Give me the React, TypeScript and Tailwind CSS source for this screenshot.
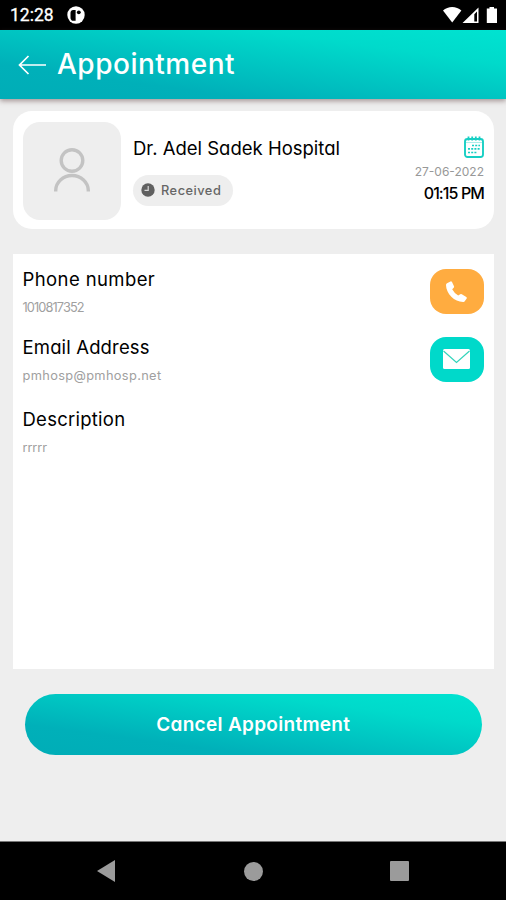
import type { ReactNode } from "react";

const teal = "bg-[linear-gradient(to_top_right,#00adb7_0%,#00b0b9_25%,#00dacb_75%,#00e3d1_100%)]";

function StatusBar() {
  return (
    <div className="flex h-[30px] shrink-0 items-center bg-black pl-[10px] pr-[8px] text-white">
      <span className="w-[44px] whitespace-nowrap font-['Roboto',sans-serif] text-[17.500px] leading-[33px] [-webkit-text-stroke:0.3px_white]">12:28</span>
      <svg className="ml-[13px]" width="18" height="18" viewBox="0 0 18 18">
        <circle cx="9" cy="9" r="8.7" fill="#fff" />
        <path d="M8.6 4H6.2C4.6 4 3.5 5.3 3.5 7v5c0 1.200.7 2.200 1.700 2.700H8.600Z" fill="#000" />
        <circle cx="11.800" cy="6.300" r="1.900" fill="#000" />
      </svg>
      <svg className="ml-auto" width="55" height="18" viewBox="0 0 55 18" fill="#fff">
        <path d="M0 4.500C2.500 2.200 5.800 1 9.200 1s6.600 1.200 9.200 3.500L9.200 16.500Z" />
        <path fillRule="evenodd" d="M35.500 1.500v15.500H19.500ZM31.300 8.200v7.300h2.700V5.500Z" />
        <path d="M46.500 1h4.500v1.500h3V17H43.800V2.500h2.700Z" />
      </svg>
    </div>
  );
}

function Header() {
  return (
    <header className={`${teal} z-10 flex h-[69px] shrink-0 items-center pl-[18px] text-white shadow-[0_2px_5px_rgba(90,60,60,0.5)]`}>
      <svg width="28" height="20" viewBox="0 0 28 20" fill="none" stroke="#fff" strokeWidth="1.700">
        <path d="M28 10H1.500M10.500 1 1.500 10l9 9" />
      </svg>
      <h1 className="ml-[11px] whitespace-nowrap text-[28px] font-medium leading-[67px] tracking-[0.5px]">Appointment</h1>
    </header>
  );
}

function SummaryCard() {
  return (
    <section className="flex h-[118px] shrink-0 rounded-[19px] bg-white pl-[10.500px] pr-[10px] pt-[10.500px]">
      <div className="flex h-[98px] w-[98px] items-center justify-center rounded-[17px] bg-[#eee]">
        <svg className="-mt-[2px]" width="38" height="46" viewBox="0 0 38 46" fill="none" stroke="#c3c3c3" strokeWidth="3.400">
          <circle cx="19" cy="13.500" r="10.800" />
          <path d="M2.700 44.500v-1a16.300 15 0 0 1 32.600 0v1" />
        </svg>
      </div>
      <div className="ml-[12px] pt-[16px]">
        <h2 className="whitespace-nowrap text-[18.500px] leading-[20px] text-black">Dr. Adel Sadek Hospital</h2>
        <div className="mt-[17px] flex h-[31px] w-[100px] items-center rounded-full bg-[#eee] pl-[8px]">
          <svg width="14" height="14" viewBox="0 0 14 14">
            <circle cx="7" cy="7" r="6.700" fill="#606060" />
            <path d="M7.200 3v4.300H3.500" fill="none" stroke="#d8d8d8" strokeWidth="1.200" />
          </svg>
          <span className="ml-[6px] whitespace-nowrap pt-[2px] text-[12.800px] font-medium tracking-[0.5px] text-[#666]">Received</span>
        </div>
      </div>
      <div className="ml-auto flex flex-col items-end pt-[14px]">
        <svg width="20" height="22" viewBox="0 0 20 22" fill="none" stroke="#18cfc4">
          <rect x="1" y="3" width="18" height="18" rx="2.500" strokeWidth="1.900" />
          <path d="M4.500.5v4M8.200.5v4M11.800.5v4M15.500.5v4" strokeWidth="1.800" />
          <path d="M8 9.500h8M4 12.800h12M4 16.500h9" strokeWidth="1.700" strokeDasharray="2 1.200" />
          <path d="M2 6.500h16" strokeWidth=".6" opacity=".6" />
        </svg>
        <span className="mt-[4px] whitespace-nowrap text-[12px] leading-[20px] text-[#989898]">27-06-2022</span>
        <span className="mt-[1px] whitespace-nowrap text-[16px] font-medium leading-[20px] tracking-[-0.9px] text-black">01:15 PM</span>
      </div>
    </section>
  );
}

function Field({ label, value, className, labelClass, valueClass, action }: { label: string; value: string; className: string; labelClass: string; valueClass: string; action?: ReactNode }) {
  return (
    <div className={`flex justify-between ${className}`}>
      <div className="whitespace-nowrap">
        <h3 className={`text-[18.500px] leading-[21px] text-black ${labelClass}`}>{label}</h3>
        <p className={`mt-[8px] text-[12.800px] leading-[20px] text-[#a0a0a0] ${valueClass}`}>{value}</p>
      </div>
      {action}
    </div>
  );
}

function Details() {
  return (
    <section className="mt-[25px] h-[415px] shrink-0 bg-white pl-[10px] pr-[10px] pt-[15px]">
      <Field
        label="Phone number" value="1010817352" className="h-[68px]" labelClass="tracking-[0.4px]" valueClass="tracking-[-0.9px]"
        action={
          <button className="flex h-[45px] w-[54.500px] items-center justify-center rounded-[16px] bg-[#ffac40]">
            <svg width="23" height="22" viewBox="0 0 22 22" fill="#fff">
              <path d="M1.500 2.200 5 .4q1-.3 1.500.7l2 4.100q.4.900-.3 1.600L6.700 8.300q2.100 4 6 6.200l2-1.300q.8-.5 1.600 0l4.500 2.800q.9.700.4 1.600l-1.800 2.500q-.5.800-1.500.9C9.200 21.200.6 12.700.5 4Q.5 2.700 1.500 2.200Z" />
            </svg>
          </button>
        }
      />
      <Field
        label="Email Address" value="pmhosp@pmhosp.net" className="h-[72px]" labelClass="tracking-[0.15px]" valueClass="tracking-[0.35px]"
        action={
          <button className="flex h-[45px] w-[54.500px] items-center justify-center rounded-[16px] bg-[#00d9ca]">
            <svg className="-mt-[1px]" width="27" height="20" viewBox="0 0 27 20">
              <rect width="27" height="20" rx="1.500" fill="#fff" />
              <path d="m.5 2 13 11.500L26.500 2" fill="none" stroke="#32d4bb" strokeWidth="1.200" />
            </svg>
          </button>
        }
      />
      <Field label="Description" value="rrrrr" className="h-[60px]" labelClass="tracking-[0.25px]" valueClass="tracking-[-0.1px]" />
    </section>
  );
}

function NavigationBar() {
  return (
    <nav className="flex h-[59px] shrink-0 items-center border-t border-[#777] bg-black pl-[97px]">
      <svg width="18" height="22" viewBox="0 0 18 22"><path d="M18 0v22L0 11Z" fill="#9b9b9b" /></svg>
      <div className="ml-[129px] h-[19px] w-[19px] rounded-full bg-[#9b9b9b]" />
      <div className="ml-[127px] h-[20px] w-[19px] rounded-[1px] bg-[#9b9b9b]" />
    </nav>
  );
}

export default function App() {
  return (
    <div className="flex h-[900px] w-[506px] flex-col overflow-hidden bg-[#eee] font-['Inter',sans-serif] [font-feature-settings:'cv11']">
      <StatusBar />
      <Header />
      <main className="flex flex-1 flex-col pl-[12.500px] pr-[12px] pt-[12px]">
        <SummaryCard />
        <Details />
        <button className={`${teal} mx-[12.500px] mt-[25px] h-[61px] shrink-0 rounded-full pt-[2px] text-[19px] font-semibold tracking-[0.3px] text-white`}>Cancel Appointment</button>
      </main>
      <NavigationBar />
    </div>
  );
}
